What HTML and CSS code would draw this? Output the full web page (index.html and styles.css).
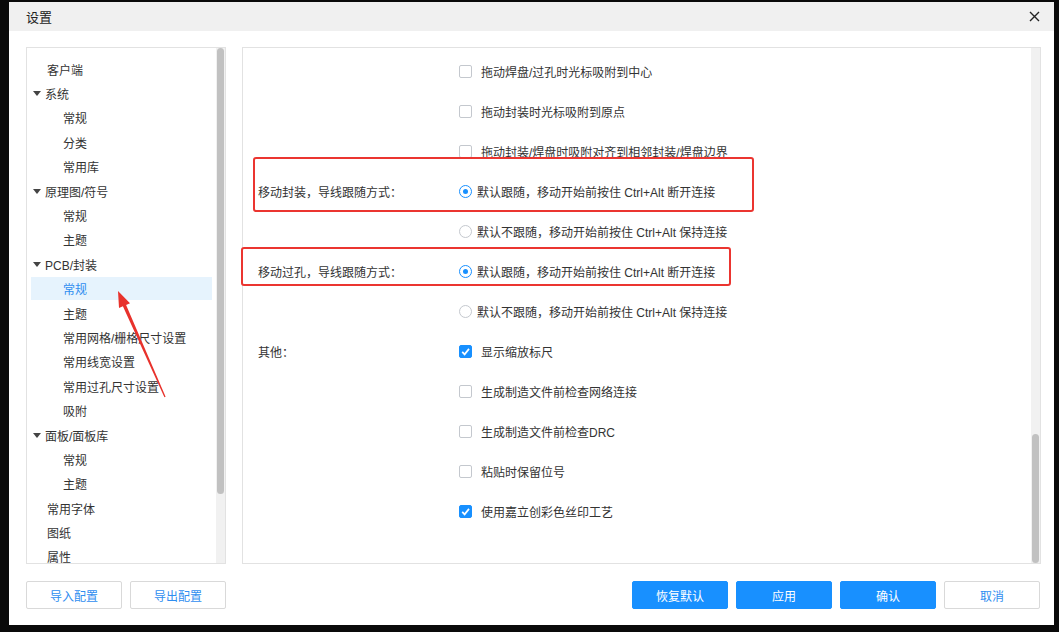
FILE: index.html
```html
<!DOCTYPE html>
<html lang="zh-CN">
<head>
    <meta charset="UTF-8">
    <meta name="viewport" content="width=device-width, initial-scale=1.0">
    <title>设置</title>
    <link rel="stylesheet" href="styles.css">
</head>
<body>
    <div class="screen">
        <div class="dialog">
            <div class="titlebar">
                <span class="title">设置</span>
                <button type="button" class="close" aria-label="关闭">
                    <svg width="11" height="11" viewBox="0 0 11 11"><path d="M1 1 L10 10 M10 1 L1 10" stroke="#222" stroke-width="1.4" fill="none"/></svg>
                </button>
            </div>

            <div class="main">
                <div class="panel tree-panel">
                    <ul class="tree">
                        <li class="leaf">客户端</li>
                        <li class="group"><i class="caret"></i>系统</li>
                        <li class="child">常规</li>
                        <li class="child">分类</li>
                        <li class="child">常用库</li>
                        <li class="group"><i class="caret"></i>原理图/符号</li>
                        <li class="child">常规</li>
                        <li class="child">主题</li>
                        <li class="group"><i class="caret"></i>PCB/封装</li>
                        <li class="child active">常规</li>
                        <li class="child">主题</li>
                        <li class="child">常用网格/栅格尺寸设置</li>
                        <li class="child">常用线宽设置</li>
                        <li class="child">常用过孔尺寸设置</li>
                        <li class="child">吸附</li>
                        <li class="group"><i class="caret"></i>面板/面板库</li>
                        <li class="child">常规</li>
                        <li class="child">主题</li>
                        <li class="leaf">常用字体</li>
                        <li class="leaf">图纸</li>
                        <li class="leaf">属性</li>
                    </ul>
                    <div class="scrollbar"><div class="thumb tree-thumb"></div></div>
                </div>

                <div class="panel options-panel">
                    <div class="options">
                        <div class="row">
                            <span class="row-label"></span>
                            <label class="check"><span class="box"></span>拖动焊盘/过孔时光标吸附到中心</label>
                        </div>
                        <div class="row">
                            <span class="row-label"></span>
                            <label class="check"><span class="box"></span>拖动封装时光标吸附到原点</label>
                        </div>
                        <div class="row">
                            <span class="row-label"></span>
                            <label class="check"><span class="box"></span>拖动封装/焊盘时吸附对齐到相邻封装/焊盘边界</label>
                        </div>
                        <div class="row">
                            <span class="row-label">移动封装，导线跟随方式：</span>
                            <label class="radio"><span class="dot on"></span>默认跟随，移动开始前按住 Ctrl+Alt 断开连接</label>
                        </div>
                        <div class="row">
                            <span class="row-label"></span>
                            <label class="radio"><span class="dot"></span>默认不跟随，移动开始前按住 Ctrl+Alt 保持连接</label>
                        </div>
                        <div class="row">
                            <span class="row-label">移动过孔，导线跟随方式：</span>
                            <label class="radio"><span class="dot on"></span>默认跟随，移动开始前按住 Ctrl+Alt 断开连接</label>
                        </div>
                        <div class="row">
                            <span class="row-label"></span>
                            <label class="radio"><span class="dot"></span>默认不跟随，移动开始前按住 Ctrl+Alt 保持连接</label>
                        </div>
                        <div class="row">
                            <span class="row-label">其他：</span>
                            <label class="check"><span class="box on"><svg width="13" height="13" viewBox="0 0 13 13"><path d="M3.2 6.9 L5.6 9.4 L10 3.9" stroke="#fff" stroke-width="1.7" fill="none"/></svg></span>显示缩放标尺</label>
                        </div>
                        <div class="row">
                            <span class="row-label"></span>
                            <label class="check"><span class="box"></span>生成制造文件前检查网络连接</label>
                        </div>
                        <div class="row">
                            <span class="row-label"></span>
                            <label class="check"><span class="box"></span>生成制造文件前检查DRC</label>
                        </div>
                        <div class="row">
                            <span class="row-label"></span>
                            <label class="check"><span class="box"></span>粘贴时保留位号</label>
                        </div>
                        <div class="row">
                            <span class="row-label"></span>
                            <label class="check"><span class="box on"><svg width="13" height="13" viewBox="0 0 13 13"><path d="M3.2 6.9 L5.6 9.4 L10 3.9" stroke="#fff" stroke-width="1.7" fill="none"/></svg></span>使用嘉立创彩色丝印工艺</label>
                        </div>
                    </div>
                    <div class="scrollbar"><div class="thumb options-thumb"></div></div>

                    <!-- annotation boxes drawn over the form -->
                    <div class="mark mark-package"></div>
                    <div class="mark mark-via"></div>
                </div>
            </div>

            <div class="footer">
                <div class="btn-group">
                    <button type="button" class="btn btn-plain">导入配置</button>
                    <button type="button" class="btn btn-plain">导出配置</button>
                </div>
                <div class="btn-group">
                    <button type="button" class="btn btn-primary">恢复默认</button>
                    <button type="button" class="btn btn-primary">应用</button>
                    <button type="button" class="btn btn-primary">确认</button>
                    <button type="button" class="btn btn-plain">取消</button>
                </div>
            </div>
        </div>

        <!-- red annotation arrow -->
        <svg class="arrow" width="1059" height="632" viewBox="0 0 1059 632">
            <polygon points="118,291 130,303.2 126.1,304.9 165.6,396.8 164.4,397.2 122.9,306.3 119,308" fill="#e8322c"/>
        </svg>
    </div>
</body>
</html>
```

FILE: styles.css
```css
:root {
    --blue: #1890ff;
    --text: #333;
    --border: #e2e2e2;
    --mark-red: #eb3530;
}

* {
    box-sizing: border-box;
}

body {
    margin: 0;
    background-color: #0a0a0a;
    font-family: "Liberation Sans", "Noto Sans CJK SC", sans-serif;
    font-size: 12px;
    color: var(--text);
}

.screen {
    position: relative;
    width: 1059px;
    height: 632px;
    padding-top: 2px;
    padding-left: 9px;
}

.dialog {
    width: 1045px;
    height: 623px;
    background-color: #fff;
    display: flex;
    flex-direction: column;
}

.titlebar {
    height: 29px;
    flex-shrink: 0;
    background-color: #f0f0f0;
    display: flex;
    align-items: center;
    justify-content: space-between;
    padding: 0 14px 0 17px;
}

.title {
    font-size: 13px;
    color: #222;
}

.close {
    border: none;
    background: none;
    padding: 0;
    width: 11px;
    height: 11px;
    display: flex;
}

.main {
    display: flex;
    gap: 16px;
    padding: 16px 13px 0 17px;
    height: 533px;
}

.panel {
    border: 1px solid var(--border);
    display: flex;
}

.tree-panel {
    width: 200px;
}

.options-panel {
    position: relative;
    flex: 1;
}

/* tree */
.tree {
    flex: 1;
    list-style: none;
    margin: 0;
    padding: 9px 4px 0 4px;
    overflow: hidden;
}

.tree li {
    height: 24.4px;
    display: flex;
    align-items: center;
    white-space: nowrap;
}

.tree .leaf {
    padding-left: 16px;
}

.tree .group {
    padding-left: 2px;
}

.tree .child {
    padding-left: 32px;
}

.tree .active {
    background-color: #e6f3fd;
    color: #2f8ef0;
    height: 23px;
    margin: 0.7px 0;
}

.caret {
    width: 0;
    height: 0;
    border-left: 4px solid transparent;
    border-right: 4px solid transparent;
    border-top: 5px solid #444;
    margin-right: 4px;
}

/* fake scrollbars */
.scrollbar {
    width: 9px;
    flex-shrink: 0;
    background-color: #f1f1f1;
    display: flex;
    flex-direction: column;
    padding: 0 1px;
}

.thumb {
    background-color: #c1c1c1;
    border-radius: 4px;
}

.tree-thumb {
    height: 446px;
}

.options-thumb {
    margin-top: auto;
    height: 129px;
}

/* options form */
.options {
    flex: 1;
    padding-top: 3px;
}

.row {
    height: 40px;
    display: flex;
    align-items: center;
}

.row-label {
    width: 216px;
    padding-left: 15px;
    flex-shrink: 0;
}

.check,
.radio {
    display: flex;
    align-items: center;
    white-space: nowrap;
}

.box {
    width: 13px;
    height: 13px;
    border: 1px solid #c4c8ce;
    border-radius: 2px;
    margin-right: 9px;
    background-color: #fff;
    display: flex;
}

.box.on {
    border-color: var(--blue);
    background-color: var(--blue);
}

.box.on svg {
    margin: -1px;
}

.dot {
    width: 13px;
    height: 13px;
    border: 1px solid #c4c8ce;
    border-radius: 50%;
    margin-right: 5px;
    display: flex;
    align-items: center;
    justify-content: center;
}

.dot.on {
    border-color: var(--blue);
}

.dot.on::after {
    content: "";
    width: 5px;
    height: 5px;
    border-radius: 50%;
    background-color: var(--blue);
}

.mark {
    position: absolute;
    border: 2.5px solid var(--mark-red);
    border-radius: 3px;
}

.mark-package {
    left: 10px;
    top: 109px;
    width: 501px;
    height: 55px;
}

.mark-via {
    left: -2px;
    top: 199px;
    width: 490px;
    height: 39px;
}

/* footer */
.footer {
    display: flex;
    justify-content: space-between;
    padding: 17px 14px 0 17px;
}

.btn-group {
    display: flex;
    gap: 8px;
}

.btn {
    width: 96px;
    height: 28px;
    border-radius: 2px;
    font-family: inherit;
    font-size: 12px;
    padding: 0;
    cursor: pointer;
}

.btn-primary {
    background-color: var(--blue);
    border: 1px solid var(--blue);
    color: #fff;
}

.btn-plain {
    background-color: #fff;
    border: 1px solid #d9d9d9;
    color: #2f8ef0;
}

.arrow {
    position: absolute;
    left: 0;
    top: 0;
    pointer-events: none;
}
```
